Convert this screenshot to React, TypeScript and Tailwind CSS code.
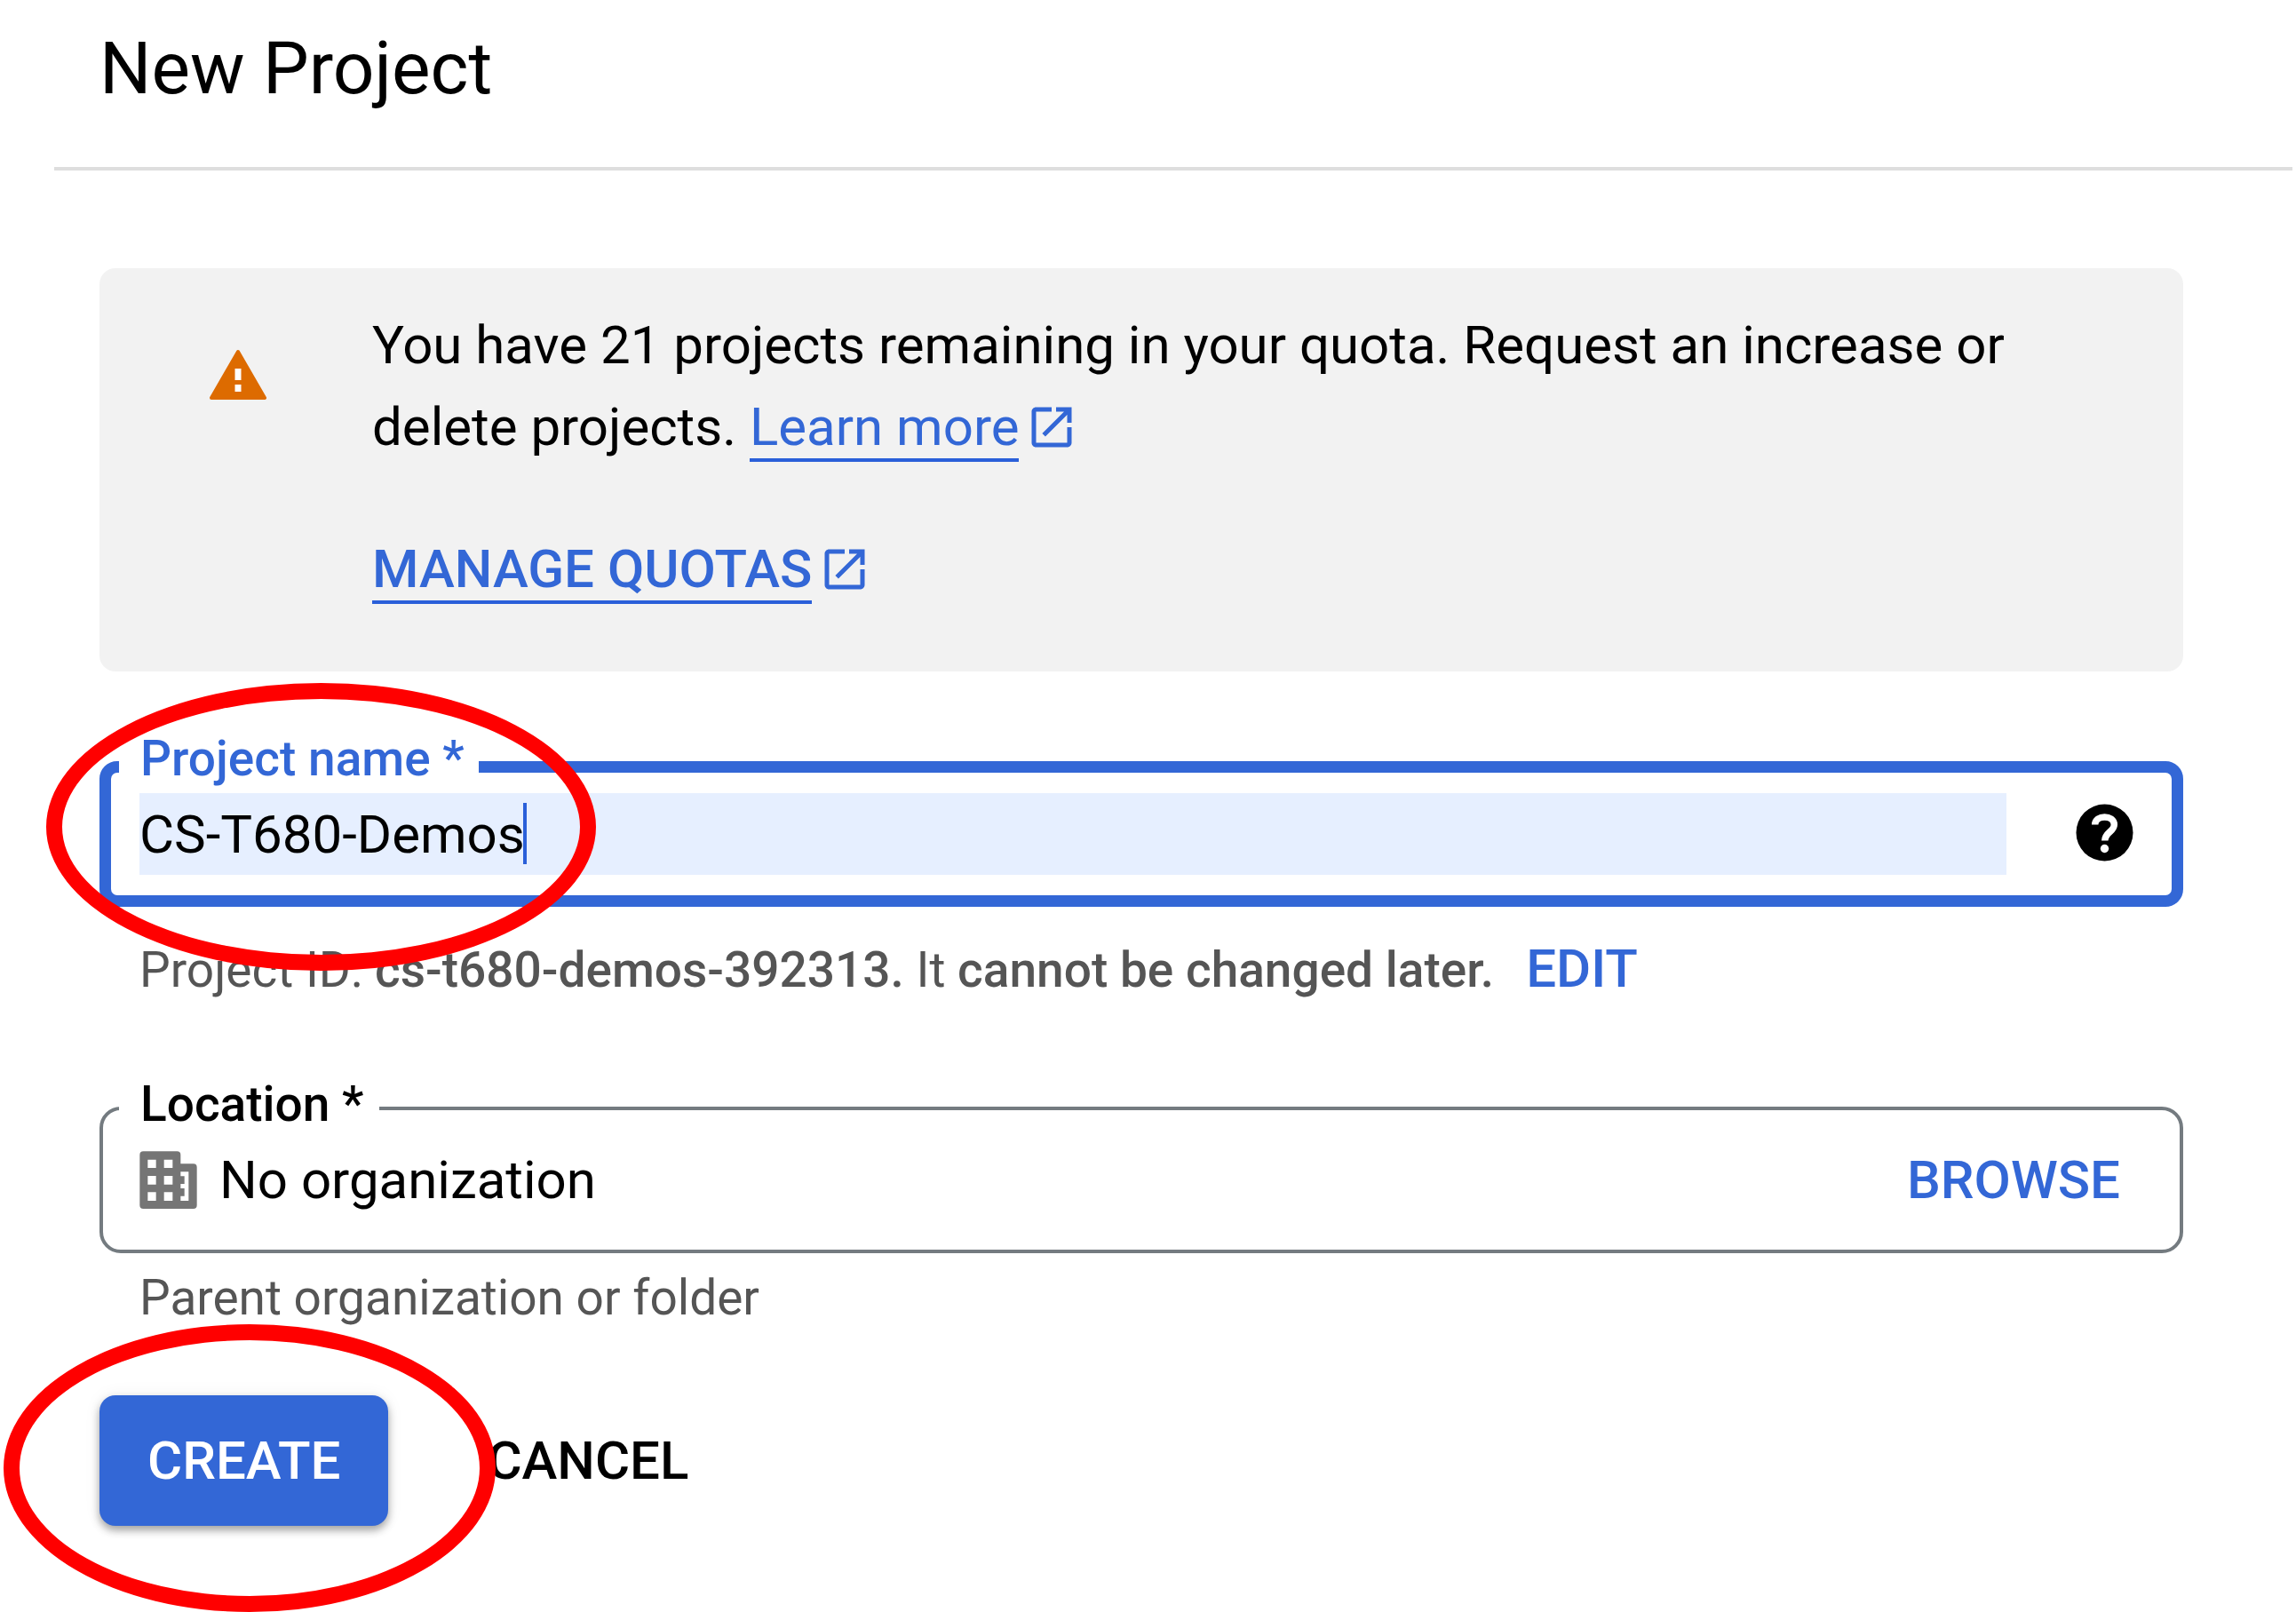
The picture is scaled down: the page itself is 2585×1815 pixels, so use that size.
import React, { useState } from "react";

function OpenInNew() {
  return (
    <svg viewBox="0 0 24 24" className="ml-[7px] inline-block size-[60px] align-[-10px]" fill="currentColor" aria-hidden="true">
      <path d="M19 19H5V5h7V3H5c-1.11 0-2 .9-2 2v14c0 1.1.89 2 2 2h14c1.1 0 2-.9 2-2v-7h-2v7zM14 3v2h3.59l-9.83 9.83 1.41 1.41L19 6.41V10h2V3h-7z" />
    </svg>
  );
}

function ExternalLink({ children }: { children: React.ReactNode }) {
  return (
    <a href="#" className="whitespace-nowrap text-[#3367d6]">
      <span className="border-b-4 border-[#2a5fd9]">{children}</span>
      <OpenInNew />
    </a>
  );
}

function QuotaBanner() {
  return (
    <section className="mt-[110px] flex rounded-[18px] bg-[#f2f2f2] pt-[41px] pr-[140px] pb-[69px] pl-[121px] text-[60px] leading-[92px]">
      <svg viewBox="0 0 70 70" className="mt-[43px] size-[70px] shrink-0" aria-hidden="true">
        <path d="M35 10L65 62H5z" fill="#dd6b00" stroke="#dd6b00" strokeWidth="4" strokeLinejoin="round" />
        <path d="M31.500 29h7v13h-7zM31.500 47h7v8h-7z" fill="#fff" />
      </svg>
      <div className="ml-[116px] min-w-0 flex-1">
        <p>
          You have 21 projects remaining in your quota. Request an increase or delete projects.{" "}
          <ExternalLink>Learn more</ExternalLink>
        </p>
        <p className="mt-[68px] font-medium">
          <ExternalLink>MANAGE QUOTAS</ExternalLink>
        </p>
      </div>
    </section>
  );
}

export default function App() {
  const [name, setName] = useState("CS-T680-Demos");

  return (
    <div className="min-h-screen overflow-hidden bg-white font-['Roboto',sans-serif] text-black">
      <header className="mr-1 ml-[61px] border-b-4 border-[#dedede] pt-[29px] pb-[63px] pl-[51px]">
        <h1 className="text-[82px] leading-[96px]">New Project</h1>
      </header>

      <main className="pr-[127px] pl-[112px]">
        <QuotaBanner />

        <form onSubmit={(e) => e.preventDefault()}>
          <div className="relative mt-[101px]">
            <div className="flex items-center rounded-[20px] border-[13px] border-[#3367d6] py-[23px] pr-[37px] pl-8">
              <input
                id="project-name"
                type="text"
                value={name}
                onChange={(e) => setName(e.target.value)}
                className="h-[92px] min-w-0 flex-1 bg-[#e6efff] text-[60px] outline-none"
              />
              <button type="button" aria-label="Help" className="ml-[72px] shrink-0">
                <svg viewBox="0 0 77 77" className="size-[77px]" aria-hidden="true">
                  <circle cx="38.500" cy="36.500" r="32" fill="#000" />
                  <path
                    d="M27.700 27.500C27.700 16 49.300 16 49.300 27.500C49.300 35.500 38.800 36 38.800 45.500"
                    fill="none"
                    stroke="#fff"
                    strokeWidth="7.500"
                  />
                  <circle cx="38.500" cy="54.500" r="4.700" fill="#fff" />
                </svg>
              </button>
            </div>
            <label
              htmlFor="project-name"
              className="absolute top-[-35px] left-[22px] bg-white pr-4 pl-6 text-[55px] leading-[64px] font-medium text-[#3367d6]"
            >
              Project name *
            </label>
            <span className="absolute top-[47px] left-[477px] h-[69px] w-1 bg-[#2a5fd9]" />
            <span className="pointer-events-none absolute top-[-88px] left-[-60px] z-10 h-[324px] w-[619px] rounded-[50%] border-[18px] border-[#ff0000]" />
          </div>

          <div className="mt-[34px] flex items-baseline gap-9 pl-[45px] text-[55px] leading-[72px] text-[#555555]">
            <p>
              Project ID: <strong className="font-medium">cs-t680-demos-392313.</strong> It{" "}
              <strong className="font-medium">cannot be changed later.</strong>
            </p>
            <button type="button" className="text-[60px] font-medium text-[#3367d6]">
              EDIT
            </button>
          </div>

          <div className="relative mt-[118px]">
            <div className="flex h-[165px] items-center rounded-[24px] border-4 border-[#747b80] pr-[67px] pl-[35px] text-[60px]">
              <svg viewBox="33 29 231 231" className="size-[77px] shrink-0" fill="#757575" aria-hidden="true">
                <path
                  fillRule="evenodd"
                  d="M64 48H178a12 12 0 0 1 12 12V90h43a12 12 0 0 1 12 12V230a12 12 0 0 1-12 12H64a12 12 0 0 1-12-12V60a12 12 0 0 1 12-12zM79 76v28h28V76zM134 76v28h29V76zM79 131v29h28v-29zM134 131v29h29v-29zM79 186v29h28v-29zM134 186v29h29v-29zM190 117v15h13v26h-13v15h13v26h-13v16h27V117z"
                />
              </svg>
              <input
                id="location"
                type="text"
                readOnly
                value="No organization"
                className="ml-[19px] min-w-0 flex-1 bg-transparent outline-none"
              />
              <button type="button" className="font-medium text-[#3367d6]">
                BROWSE
              </button>
            </div>
            <label
              htmlFor="location"
              className="absolute top-[-35px] left-[22px] bg-white pr-[18px] pl-6 text-[55px] leading-[64px] font-medium"
            >
              Location *
            </label>
          </div>
          <p className="mt-[14px] pl-[45px] text-[55px] leading-[72px] text-[#555555]">Parent organization or folder</p>

          <div className="relative mt-[74px] flex items-center gap-[111px] text-[60px] font-medium">
            <button
              type="submit"
              className="h-[147px] rounded-[18px] bg-[#3367d6] px-[54px] text-white shadow-[0_5px_10px_rgba(0,0,0,0.35),0_0_20px_rgba(0,0,0,0.06)]"
            >
              CREATE
            </button>
            <button type="button">CANCEL</button>
            <span className="pointer-events-none absolute top-[-80px] left-[-108px] z-10 h-[324px] w-[554px] rounded-[50%] border-[18px] border-[#ff0000]" />
          </div>
        </form>
      </main>
    </div>
  );
}
